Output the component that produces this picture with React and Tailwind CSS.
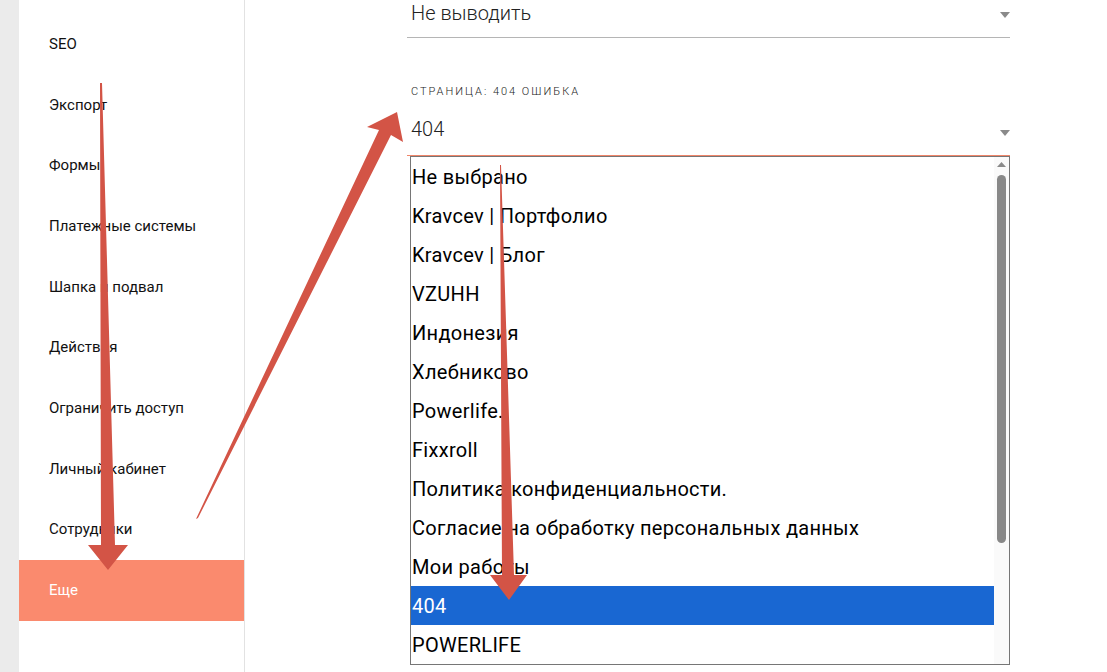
const menu = [
  "SEO",
  "Экспорт",
  "Формы",
  "Платежные системы",
  "Шапка и подвал",
  "Действия",
  "Ограничить доступ",
  "Личный кабинет",
  "Сотрудники",
  "Еще",
];

const pages = [
  "Не выбрано",
  "Kravcev | Портфолио",
  "Kravcev | Блог",
  "VZUHH",
  "Индонезия",
  "Хлебниково",
  "Powerlife.",
  "Fixxroll",
  "Политика конфиденциальности.",
  "Согласие на обработку персональных данных",
  "Мои работы",
  "404",
  "POWERLIFE",
];

function Caret() {
  return (
    <svg width="10" height="6" viewBox="0 0 10 6" className="shrink-0">
      <path d="M0 0h10L5 6z" fill="#8a8a8a" />
    </svg>
  );
}

function Arrows() {
  return (
    <svg width="1107" height="672" viewBox="0 0 1107 672" className="absolute inset-0 pointer-events-none">
      <polygon points="100,83 102,83 115,545 128,545 108,570 88,545 101,545" fill="#d35446" />
      <polygon points="196,519 198,518 391,135 403,142 397,112 367,127 379,130" fill="#d35446" />
      <polygon points="500,165 501,165 514,575 527,575 509,600 490,575 502,575" fill="#d35446" />
    </svg>
  );
}

export default function App() {
  return (
    <div className="relative w-[1107px] h-[672px] overflow-hidden bg-white flex font-['Roboto',sans-serif] text-[#111]">
      <div className="w-[19px] shrink-0 bg-[#ebebeb]" />
      <aside className="w-[226px] shrink-0 border-r border-[#e2e2e2] pt-[14px]">
        {menu.map((m) => (
          <div
            key={m}
            className={`h-[60.67px] flex items-center pl-[30px] text-[15px] ${m === "Еще" ? "bg-[#fa8a6e] text-white" : "text-[#111]"}`}
          >
            {m}
          </div>
        ))}
      </aside>

      <main className="ml-[162px] w-[603px] shrink-0">
        <div className="h-[38px] border-b border-[#b5b5b5] flex items-start justify-between pl-[4px] pt-[1px]">
          <span className="text-[20px] leading-[24px] font-light text-[#222]">Не выводить</span>
          <span className="pt-[11px]"><Caret /></span>
        </div>

        <div className="mt-[48px] pl-[4px] text-[11px] leading-[12px] font-light uppercase tracking-[2px] text-[#222]">
          Страница: 404 ошибка
        </div>

        <div className="mt-[18px] h-[40px] border-b border-[#f0866a] flex items-start justify-between pl-[4px] pt-[1px]">
          <span className="text-[20px] leading-[24px] font-light text-[#222]">404</span>
          <span className="pt-[13px]"><Caret /></span>
        </div>

        <div className="ml-[3px] w-[600px] border border-[#767676] flex">
          <div className="flex-1 flex flex-col">
            {pages.map((p) => (
              <div
                key={p}
                className={`h-[39px] flex items-center pl-[1px] text-[20px] tracking-[0.3px] whitespace-nowrap ${p === "404" ? "bg-[#1967d2] text-white" : "text-black"}`}
              >
                {p}
              </div>
            ))}
          </div>
          <div className="w-[15px] shrink-0 bg-[#fafafa] flex flex-col items-center pt-[5px]">
            <svg width="9" height="5" viewBox="0 0 9 5">
              <path d="M0 5h9L4.5 0z" fill="#8a8a8a" />
            </svg>
            <div className="mt-[8px] w-[9px] h-[368px] rounded-full bg-[#888]" />
          </div>
        </div>
      </main>

      <Arrows />
    </div>
  );
}
